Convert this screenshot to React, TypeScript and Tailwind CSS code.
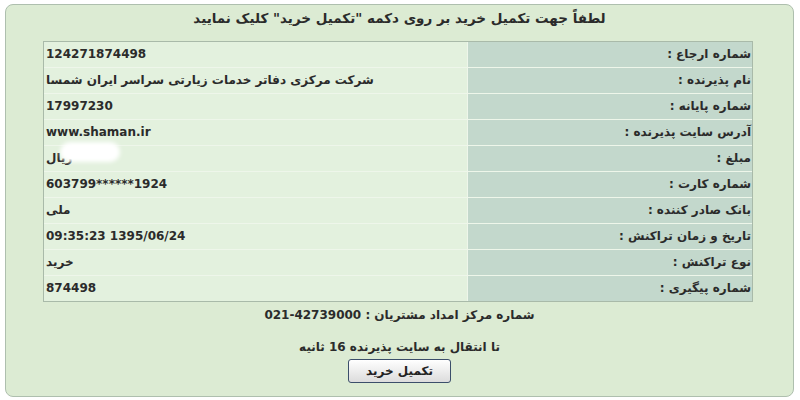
import type { JSX } from 'react';

const rows: { label: string; value: JSX.Element | string; ltr?: boolean }[] = [
  { label: 'شماره ارجاع :', value: '124271874498', ltr: true },
  { label: 'نام پذیرنده :', value: 'شرکت مرکزی دفاتر خدمات زیارتی سراسر ایران شمسا' },
  { label: 'شماره پایانه :', value: '17997230', ltr: true },
  { label: 'آدرس سایت پذیرنده :', value: 'www.shaman.ir', ltr: true },
  {
    label: 'مبلغ :',
    value: (
      <span className="relative inline-block">
        <span>ریال</span>
        <span className="absolute left-[14px] top-[-4px] h-[20px] w-[60px] rounded-full bg-white blur-[2px]" />
      </span>
    ),
  },
  { label: 'شماره کارت :', value: '603799******1924', ltr: true },
  { label: 'بانک صادر کننده :', value: 'ملی' },
  { label: 'تاریخ و زمان تراکنش :', value: '09:35:23 1395/06/24', ltr: true },
  { label: 'نوع تراکنش :', value: 'خرید' },
  { label: 'شماره پیگیری :', value: '874498', ltr: true },
];

/**
 * Payment receipt confirmation panel (RTL, Persian).
 */
const App = (): JSX.Element => {
  return (
    <div
      dir="rtl"
      className="h-[400px] w-[800px] bg-white pt-[4px] pr-[6px] text-[#2b2b2b]"
      style={{ fontFamily: 'Tahoma, "DejaVu Sans", sans-serif' }}
    >
      <div className="h-[393px] w-[789px] rounded-[8px] border border-[#aebfae] bg-[#dcebd3]">
        {/** Title */}
        <div className="h-[26px] text-center text-[13.5px] font-bold leading-[26px]">
          لطفاً جهت تکمیل خرید بر روی دکمه "تکمیل خرید" کلیک نمایید
        </div>

        {/** Receipt table */}
        <div className="mr-[40px] mt-[10px] grid w-[710px] grid-cols-[284px_1fr] gap-[1px] border border-[#a9baa9] bg-[#eef6ea] text-[12px] font-bold">
          {rows.map((row) => (
            <div key={row.label} className="contents">
              <div className="h-[25px] bg-[#c3d8cc] pr-[1px] text-right leading-[25px]">{row.label}</div>
              <div
                dir={row.ltr ? 'ltr' : 'rtl'}
                className="h-[25px] bg-[#e3f1de] px-[2px] text-left leading-[25px]"
              >
                {row.value}
              </div>
            </div>
          ))}
        </div>

        {/** Support phone */}
        <div className="h-[26px] text-center text-[12px] font-bold leading-[26px]">
          شماره مرکز امداد مشتریان : <bdi dir="ltr">021-42739000</bdi>
        </div>

        {/** Redirect notice */}
        <div className="mt-[6px] h-[26px] text-center text-[12px] font-bold leading-[26px]">
          تا انتقال به سایت پذیرنده 16 ثانیه
        </div>

        {/** Submit button */}
        <div className="flex justify-center">
          <button
            className="mt-[-1px] h-[24px] w-[103px] rounded-[3px] border border-[#3b4e6a] bg-gradient-to-b from-white to-[#dcdcdc] text-[12px] font-bold leading-[22px] text-[#222]"
            style={{ fontFamily: 'Tahoma, "DejaVu Sans", sans-serif' }}
          >
            تکمیل خرید
          </button>
        </div>
      </div>
    </div>
  );
};

export default App;
